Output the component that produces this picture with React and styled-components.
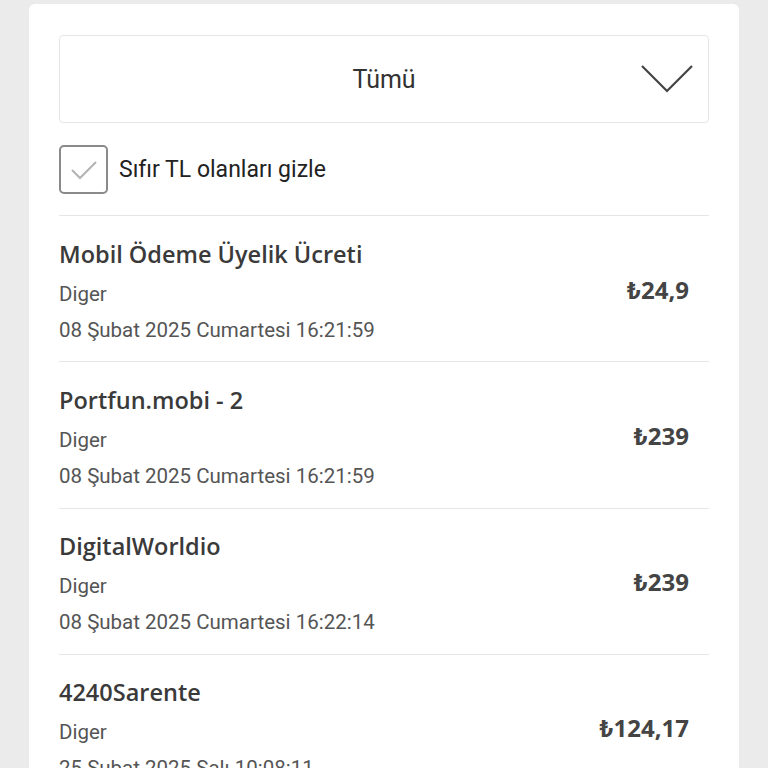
import React, { useState } from 'react';
import styled, { createGlobalStyle } from 'styled-components';

const GlobalStyle = createGlobalStyle`
  html, body {
    margin: 0;
    padding: 0;
    background: #ebebeb;
    font-family: Roboto, 'Noto Sans', 'DejaVu Sans', sans-serif;
  }
`;

const payments = [
  { id: 1, title: 'Mobil Ödeme Üyelik Ücreti', category: 'Diger', date: '08 Şubat 2025 Cumartesi 16:21:59', amount: '₺24,9' },
  { id: 2, title: 'Portfun.mobi - 2', category: 'Diger', date: '08 Şubat 2025 Cumartesi 16:21:59', amount: '₺239' },
  { id: 3, title: 'DigitalWorldio', category: 'Diger', date: '08 Şubat 2025 Cumartesi 16:22:14', amount: '₺239' },
  { id: 4, title: '4240Sarente', category: 'Diger', date: '25 Şubat 2025 Salı 10:08:11', amount: '₺124,17' },
];

const ChevronDown = () => (
  <svg width="54" height="30" viewBox="0 0 54 30" fill="none">
    <path d="M2 2 L27 27 L52 2" stroke="#444" strokeWidth="2.2" />
  </svg>
);

const CheckMark = () => (
  <svg width="30" height="24" viewBox="0 0 30 24" fill="none">
    <path d="M3 12 L11 20 L27 4" stroke="#b3b3b3" strokeWidth="2" />
  </svg>
);

const App = () => {
  const [hideZero, setHideZero] = useState(true);

  return (
    <>
      <GlobalStyle />
      <Page>
        <Card>
          <Select>
            <SelectLabel>Tümü</SelectLabel>
            <ChevronWrap>
              <ChevronDown />
            </ChevronWrap>
          </Select>

          <FilterRow onClick={() => setHideZero(!hideZero)}>
            <CheckBox>{hideZero && <CheckMark />}</CheckBox>
            <FilterLabel>Sıfır TL olanları gizle</FilterLabel>
          </FilterRow>

          <List>
            {payments.map(p => (
              <Row key={p.id}>
                <Info>
                  <Title>{p.title}</Title>
                  <Meta>{p.category}</Meta>
                  <Meta>{p.date}</Meta>
                </Info>
                <Amount>{p.amount}</Amount>
              </Row>
            ))}
          </List>
        </Card>
      </Page>
    </>
  );
};

const Page = styled.div`
  padding: 4px 29px 0;
  height: 768px;
  overflow: hidden;
  box-sizing: border-box;
`;

const Card = styled.div`
  background: #fff;
  border-radius: 6px;
  padding: 31px 30px 0;
  min-height: 900px;
`;

const Select = styled.div`
  position: relative;
  height: 88px;
  border: 1px solid #e6e6e6;
  border-radius: 4px;
  box-sizing: border-box;
  display: flex;
  align-items: center;
  justify-content: center;
`;

const SelectLabel = styled.span`
  font-size: 25px;
  color: #333;
`;

const ChevronWrap = styled.span`
  position: absolute;
  right: 14px;
  top: 28px;
  display: flex;
`;

const FilterRow = styled.div`
  display: flex;
  align-items: center;
  gap: 11px;
  margin-top: 22px;
  padding-bottom: 21px;
  border-bottom: 1px solid #e6e6e6;
  cursor: pointer;
`;

const CheckBox = styled.div`
  width: 49px;
  height: 49px;
  box-sizing: border-box;
  border: 2px solid #8a8a8a;
  border-radius: 5px;
  display: flex;
  align-items: center;
  justify-content: center;
`;

const FilterLabel = styled.span`
  font-size: 23px;
  color: #222;
`;

const List = styled.div`
  display: flex;
  flex-direction: column;
`;

const Row = styled.div`
  display: flex;
  align-items: center;
  justify-content: space-between;
  padding: 21.5px 20px 13.8px 0;
  border-bottom: 1px solid #e6e6e6;
`;

const Info = styled.div`
  display: flex;
  flex-direction: column;
`;

const Title = styled.div`
  font-family: 'Open Sans', Roboto, sans-serif;
  font-size: 23.5px;
  font-weight: 600;
  color: #3a3a3a;
  line-height: 32px;
  height: 32px;
  margin-bottom: 6px;
`;

const Meta = styled.div`
  font-size: 20.5px;
  color: #555;
  line-height: 36px;
  height: 36px;
`;

const Amount = styled.div`
  font-family: 'Open Sans', Roboto, sans-serif;
  font-size: 24px;
  font-weight: 700;
  color: #444;
  line-height: 32px;
  margin-bottom: 6px;
`;

export default App;
